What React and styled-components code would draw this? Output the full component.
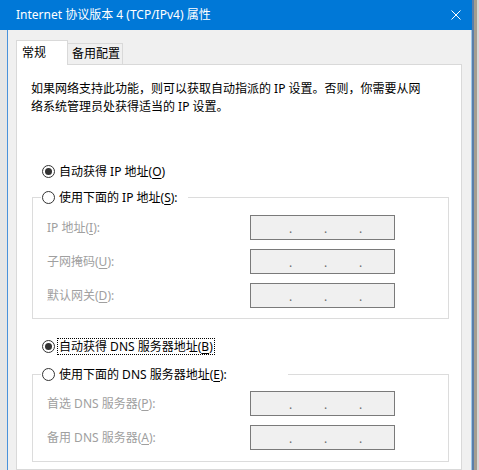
import React from "react";
import styled, { createGlobalStyle } from "styled-components";

const GlobalStyle = createGlobalStyle`
  html, body {
    margin: 0;
    padding: 0;
  }
  body {
    background: #e9e9e9;
    font-family: "Noto Sans", "Noto Sans CJK SC", sans-serif;
    font-size: 12px;
    color: #000;
  }
`;

const Screen = styled.div`
  display: flex;
  width: 479px;
  height: 470px;
  overflow: hidden;
`;

const Window = styled.div`
  width: 472px;
  flex: none;
  display: flex;
  flex-direction: column;
`;

const Desk = styled.div`
  flex: 1;
  background: linear-gradient(
    to right,
    #5a7ea8 0 2px,
    #a39d8f 2px 5px,
    #d8d8d8 5px
  );
`;

const TitleBar = styled.div`
  height: 30px;
  flex: none;
  background: #0078d7;
  color: #fff;
  display: flex;
  align-items: center;
  padding: 0 11px 0 16px;
`;

const Title = styled.span`
  flex: 1;
  line-height: 16px;
  white-space: nowrap;
`;

const Frame = styled.div`
  flex: 1;
  display: flex;
  min-height: 0;
`;

const Behind = styled.div`
  width: 7px;
  flex: none;
  background: #e6e6e6;
`;

const Client = styled.div`
  flex: 1;
  display: flex;
  flex-direction: column;
  background: #f0f0f0;
  border-left: 1px solid #4a92db;
  border-right: 1px solid #9cc7e8;
  padding: 10px 9px 0 8px;
`;

const TabStrip = styled.div`
  display: flex;
  align-items: flex-end;
  height: 24px;
  flex: none;
`;

const Tab = styled.div`
  display: flex;
  align-items: center;
  border: 1px solid #d9d9d9;
  border-bottom: none;
  line-height: 16px;
  white-space: nowrap;
  background: ${(p) => (p.$active ? "#fff" : "#f0f0f0")};
  height: ${(p) => (p.$active ? "25px" : "21px")};
  margin-bottom: ${(p) => (p.$active ? "-1px" : "0")};
  padding: ${(p) => (p.$active ? "0 0 0 5px" : "0 4px")};
  width: ${(p) => p.$width}px;
  box-sizing: border-box;
  position: relative;
  z-index: ${(p) => (p.$active ? 1 : 0)};
  ${(p) => !p.$active && "border-left: none;"}
`;

const Panel = styled.div`
  flex: 1;
  background: #fff;
  border: 1px solid #d9d9d9;
  padding: 15px 14px 0 14px;
  display: flex;
  flex-direction: column;
`;

const Description = styled.p`
  margin: 0;
  line-height: 18px;
`;

const RadioRow = styled.div`
  display: flex;
  align-items: center;
  gap: 4px;
  height: 18px;
  padding-left: ${(p) => p.$inset}px;
  margin-top: ${(p) => p.$top || 0}px;
  white-space: nowrap;
`;

const RadioCircle = styled.span`
  width: 13px;
  height: 13px;
  box-sizing: border-box;
  border: 1px solid #333;
  border-radius: 50%;
  background: #fff;
  display: flex;
  align-items: center;
  justify-content: center;
  flex: none;

  &::after {
    content: "";
    width: 7px;
    height: 7px;
    border-radius: 50%;
    background: ${(p) => (p.$checked ? "#333" : "transparent")};
  }
`;

const RadioLabel = styled.span`
  line-height: 15px;
  ${(p) =>
    p.$focused &&
    `
    border: 1px dotted #000;
    padding: 0 1px;
    margin-left: -2px;
  `}
`;

const Key = styled.span`
  text-decoration: underline;
  text-underline-offset: 2px;
`;

const Group = styled.fieldset`
  margin: ${(p) => p.$top}px -2px 0 1px;
  padding: ${(p) => p.$padTop}px 0 ${(p) => p.$padBottom}px 14px;
  border: 1px solid #dcdcdc;
  display: flex;
  flex-direction: column;
  gap: 9px;
  min-width: 0;
`;

const GroupLegend = styled.legend`
  padding: 0;
  margin-left: -6px;
  width: ${(p) => p.$width}px;
`;

const FieldRow = styled.div`
  display: grid;
  grid-template-columns: 203px 145px;
  align-items: center;
  height: 25px;
`;

const FieldLabel = styled.span`
  color: #a0a0a0;
  line-height: 16px;
  white-space: nowrap;
`;

const AddressBox = styled.div`
  height: 25px;
  box-sizing: border-box;
  border: 1px solid #7a7a7a;
  background: #f0f0f0;
  display: grid;
  grid-template-columns: 38px 2px 33px 2px 33px 2px 1fr;
  align-items: center;
`;

const Dot = styled.span`
  grid-column: ${(p) => p.$col};
  color: #6d6d6d;
  font-size: 12px;
  line-height: 12px;
  margin-top: 2px;
  text-align: center;
`;

const CloseIcon = () => (
  <svg width="10" height="10" viewBox="0 0 10 10">
    <path d="M0.5 0.5 L9.5 9.5 M9.5 0.5 L0.5 9.5" stroke="#fff" strokeWidth="1" />
  </svg>
);

const Radio = ({ checked, inset, top, focused, children }) => (
  <RadioRow $inset={inset} $top={top}>
    <RadioCircle $checked={checked} />
    <RadioLabel $focused={focused}>{children}</RadioLabel>
  </RadioRow>
);

const Address = ({ label }) => (
  <FieldRow>
    <FieldLabel>{label}</FieldLabel>
    <AddressBox>
      <Dot $col={2}>.</Dot>
      <Dot $col={4}>.</Dot>
      <Dot $col={6}>.</Dot>
    </AddressBox>
  </FieldRow>
);

export default function App() {
  return (
    <>
      <GlobalStyle />
      <Screen>
        <Window>
          <TitleBar>
            <Title>Internet 协议版本 4 (TCP/IPv4) 属性</Title>
            <CloseIcon />
          </TitleBar>
          <Frame>
            <Behind />
            <Client>
              <TabStrip>
                <Tab $active $width={52}>常规</Tab>
                <Tab $width={55}>备用配置</Tab>
              </TabStrip>
              <Panel>
                <Description>
                  如果网络支持此功能，则可以获取自动指派的 IP 设置。否则，你需要从网
                  <br />
                  络系统管理员处获得适当的 IP 设置。
                </Description>

                <Radio checked inset={11} top={46}>
                  自动获得 IP 地址(<Key>O</Key>)
                </Radio>
                <Group $top={8} $padTop={9} $padBottom={10}>
                  <GroupLegend $width={147}>
                    <Radio inset={1}>
                      使用下面的 IP 地址(<Key>S</Key>):
                    </Radio>
                  </GroupLegend>
                  <Address label={<>IP 地址(<Key>I</Key>):</>} />
                  <Address label={<>子网掩码(<Key>U</Key>):</>} />
                  <Address label={<>默认网关(<Key>D</Key>):</>} />
                </Group>

                <Radio checked focused inset={11} top={18}>
                  自动获得 DNS 服务器地址(<Key>B</Key>)
                </Radio>
                <Group $top={10} $padTop={8} $padBottom={11}>
                  <GroupLegend $width={247}>
                    <Radio inset={1}>
                      使用下面的 DNS 服务器地址(<Key>E</Key>):
                    </Radio>
                  </GroupLegend>
                  <Address label={<>首选 DNS 服务器(<Key>P</Key>):</>} />
                  <Address label={<>备用 DNS 服务器(<Key>A</Key>):</>} />
                </Group>
              </Panel>
            </Client>
          </Frame>
        </Window>
        <Desk />
      </Screen>
    </>
  );
}
